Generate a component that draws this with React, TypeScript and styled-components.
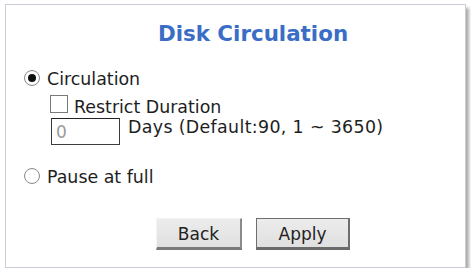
import React from "react";
import styled, { createGlobalStyle } from "styled-components";

const Global = createGlobalStyle`
  html, body { margin: 0; padding: 0; background: #ffffff; }
  body { font-family: "DejaVu Sans", Verdana, sans-serif; color: #1e1e1e; }
`;

const Panel = styled.div`
  box-sizing: border-box;
  margin: 4px 0 0 5px;
  width: 461px;
  height: 264px;
  border: 1px solid #c9cdd6;
  background: #ffffff;
  box-shadow: 3px 4px 3px rgba(0, 0, 0, 0.33);
  padding: 16px 0 0 0;
  display: flex;
  flex-direction: column;
`;

const Title = styled.div`
  padding-left: 35px;
  text-align: center;
  font-weight: bold;
  font-size: 21.4px;
  line-height: 25px;
  color: #3a6ec6;
`;

const Options = styled.div`
  padding-left: 18px;
  display: flex;
  flex-direction: column;
`;

const Row = styled.div<{ $top: number; $indent?: number }>`
  display: flex;
  align-items: flex-start;
  margin-top: ${(p) => p.$top}px;
  padding-left: ${(p) => p.$indent ?? 0}px;
  font-size: 17.4px;
  line-height: 20px;
`;

const Radio = styled.span<{ $checked?: boolean }>`
  box-sizing: border-box;
  width: 16px;
  height: 16px;
  margin: 1px 7px 0 0;
  border-radius: 50%;
  border: 1px solid #8a8a8a;
  background: radial-gradient(circle, #ffffff 60%, #e9e9e9 100%);
  display: flex;
  align-items: center;
  justify-content: center;
  &::after {
    content: "";
    width: 8px;
    height: 8px;
    border-radius: 50%;
    background: ${(p) => (p.$checked ? "#111" : "transparent")};
  }
`;

const Check = styled.span`
  box-sizing: border-box;
  width: 18px;
  height: 18px;
  margin: -2px 6px 0 0;
  border: 1px solid #7a7a7a;
  background: #fff;
`;

const NumInput = styled.div`
  box-sizing: border-box;
  width: 69px;
  height: 27px;
  margin-right: 8px;
  border: 1px solid #3c3c3c;
  border-top-color: #222;
  padding: 3px 0 0 4px;
  color: #9a9a9a;
  font-size: 17px;
  line-height: 20px;
`;

const Label = styled.span<{ $top?: number; $spacing?: number }>`
  margin-top: ${(p) => p.$top ?? 0}px;
  letter-spacing: ${(p) => p.$spacing ?? 0}px;
`;

const Buttons = styled.div`
  margin-top: 31px;
  padding-left: 35px;
  display: flex;
  justify-content: center;
  gap: 14px;
`;

const Btn = styled.div<{ $w: number; $default?: boolean }>`
  box-sizing: border-box;
  width: ${(p) => p.$w}px;
  height: 32px;
  background: linear-gradient(#ececec, #e0e0e0);
  border-style: solid;
  border-width: 1px 2px 3px 1px;
  border-color: ${(p) =>
    p.$default
      ? "#6e6e6e #6e6e6e #6a6a6a #6e6e6e"
      : "#f4f4f4 #8a8a8a #7a7a7a #f4f4f4"};
  display: flex;
  align-items: center;
  justify-content: center;
  font-size: 17px;
  line-height: 20px;
  color: #222;
  padding-top: 1px;
`;

export default function App() {
  return (
    <>
      <Global />
      <Panel>
        <Title>Disk Circulation</Title>
        <Options>
          <Row $top={23}>
            <Radio $checked />
            <span>Circulation</span>
          </Row>
          <Row $top={8} $indent={26}>
            <Check />
            <span>Restrict Duration</span>
          </Row>
          <Row $top={1} $indent={27}>
            <NumInput>0</NumInput>
            <Label $top={-1} $spacing={0.35}>
              Days (Default:90, 1 ~ 3650)
            </Label>
          </Row>
          <Row $top={22}>
            <Radio />
            <span>Pause at full</span>
          </Row>
        </Options>
        <Buttons>
          <Btn $w={86}>Back</Btn>
          <Btn $w={94} $default>
            Apply
          </Btn>
        </Buttons>
      </Panel>
    </>
  );
}
